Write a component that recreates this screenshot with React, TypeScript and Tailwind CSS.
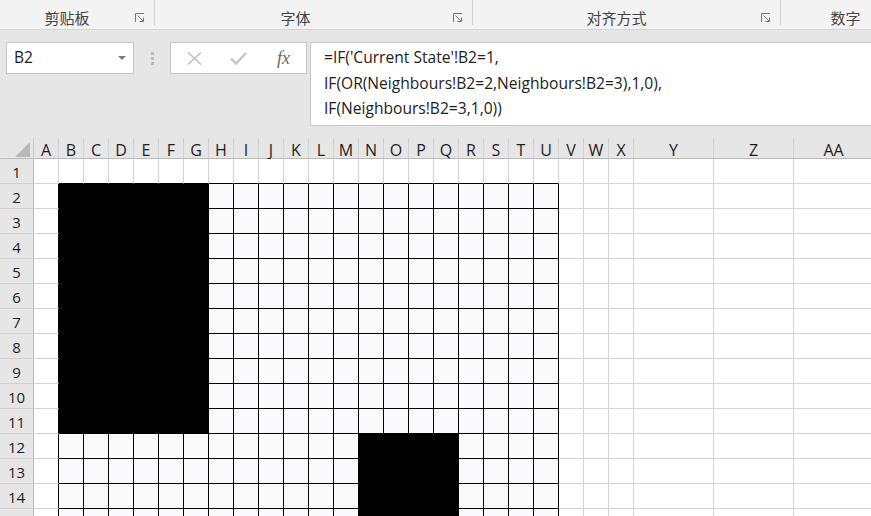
const COLS = [
  "A", "B", "C", "D", "E", "F", "G", "H", "I", "J", "K", "L", "M", "N",
  "O", "P", "Q", "R", "S", "T", "U", "V", "W", "X", "Y", "Z", "AA",
];
const ROWS = [1, 2, 3, 4, 5, 6, 7, 8, 9, 10, 11, 12, 13, 14, 15];

const wide = (c: number) => c >= 24;

// bordered block B2:U.. and the live (black) cells
const inBox = (r: number, c: number) => r >= 2 && c >= 1 && c <= 20;
const isOn = (r: number, c: number) =>
  (r >= 2 && r <= 11 && c >= 1 && c <= 6) || (r >= 12 && c >= 13 && c <= 16);

const GROUPS = [
  { label: "剪贴板", w: "w-[155px]", pad: "" },
  { label: "字体", w: "w-[318px]", pad: "pr-[16px]" },
  { label: "对齐方式", w: "w-[308px]", pad: "" },
  { label: "数字", w: "w-[150px]", pad: "" },
];

const Launcher = () => (
  <svg width="10" height="10" viewBox="0 0 10 10" className="text-[#777]">
    <path d="M0.5 9V0.5H9" fill="none" stroke="currentColor" strokeWidth="1" />
    <path d="M2.5 2.5L8 8M4.5 8.5H8.5V4.5" fill="none" stroke="currentColor" strokeWidth="1" />
  </svg>
);

const Ribbon = () => (
  <div className="flex h-[30px] shrink-0 overflow-hidden border-b border-[#d5d5d5] bg-[#f3f3f3]">
    {GROUPS.map((g, i) => (
      <div key={i} className={`${g.w} flex h-[25px] shrink-0 items-start border-r border-[#d2d2d2]`}>
        <div className={`${g.pad} flex-1 pt-[8px] text-center text-[15px] leading-[20px] text-[#444]`}>{g.label}</div>
        <div className="flex w-[20px] justify-start pl-[1px] pt-[13px]">
          <Launcher />
        </div>
      </div>
    ))}
  </div>
);

const FormulaBar = () => (
  <div className="flex h-[108px] shrink-0 items-start overflow-hidden bg-[#e6e6e6] pt-[12px]">
    <div className="ml-[6px] flex h-[32px] w-[128px] shrink-0 items-center border border-[#c6c6c6] bg-white pl-[7px] pr-[7px]">
      <span className="flex-1 font-['Open_Sans',sans-serif] text-[15.5px] text-[#222]">B2</span>
      <svg width="8" height="4" viewBox="0 0 8 4">
        <path d="M0 0H8L4 4Z" fill="#7a7a7a" />
      </svg>
    </div>
    <div className="flex h-[32px] w-[36px] shrink-0 flex-col items-center justify-center gap-[2px]">
      <div className="h-[3px] w-[3px] bg-[#bdbdbd]" />
      <div className="h-[3px] w-[3px] bg-[#bdbdbd]" />
      <div className="h-[3px] w-[3px] bg-[#bdbdbd]" />
    </div>
    <div className="flex h-[32px] w-[137px] shrink-0 items-center border border-[#c6c6c6] bg-white">
      <div className="flex w-[45px] justify-center pl-[1px]">
        <svg width="15" height="13" viewBox="0 0 15 13">
          <path d="M1 0.5L14 12.5M14 0.5L1 12.5" stroke="#bbbbbb" strokeWidth="1.4" />
        </svg>
      </div>
      <div className="flex w-[45px] justify-center">
        <svg width="17" height="13" viewBox="0 0 17 13">
          <path d="M1 6.5L6 11.5L16 1" fill="none" stroke="#c4c4c4" strokeWidth="2.4" />
        </svg>
      </div>
      <div className="flex w-[45px] justify-center font-['Liberation_Serif',serif] text-[18px] italic text-[#6a6a6a]">
        fx
      </div>
    </div>
    <div className="ml-[3px] h-[84px] w-[600px] shrink-0 border border-[#c6c6c6] bg-white pl-[13px] pt-[2px] font-['Open_Sans',sans-serif] text-[15.6px] leading-[25.5px] text-[#222]">
      <div>=IF('Current State'!B2=1,</div>
      <div>IF(OR(Neighbours!B2=2,Neighbours!B2=3),1,0),</div>
      <div>IF(Neighbours!B2=3,1,0))</div>
    </div>
  </div>
);

const Cell = ({ r, c }: { r: number; c: number }) => {
  const on = isOn(r, c);
  const box = inBox(r, c);
  const rb = box || inBox(r, c + 1);
  const bb = box || inBox(r + 1, c);
  return (
    <div
      className={`${wide(c) ? "w-[80px]" : "w-[25px]"} h-[25px] shrink-0 border-r border-b ${
        on ? "bg-black" : box ? "bg-[#fafafd]" : "bg-white"
      } ${rb ? "border-r-black" : "border-r-[#d4d4d4]"} ${bb ? "border-b-black" : "border-b-[#d4d4d4]"}`}
    />
  );
};

const Sheet = () => (
  <div className="flex-1 overflow-hidden bg-white font-['Open_Sans',sans-serif] text-[#1e1e1e]">
    <div className="flex h-[21px] bg-[#e6e6e6]">
      <div className="flex h-[21px] w-[34px] shrink-0 items-end justify-end border-r border-b border-r-[#c8c8c8] border-b-[#bcbcbc] pb-[1px] pr-[3px]">
        <svg width="15" height="15" viewBox="0 0 15 15">
          <path d="M15 0V15H0Z" fill="#b9b9b9" />
        </svg>
      </div>
      {COLS.map((name, c) => (
        <div
          key={name}
          className={`${wide(c) ? "w-[80px]" : "w-[25px]"} flex h-[21px] shrink-0 items-center justify-center border-r border-b border-r-[#d0d0d0] border-b-[#bcbcbc] pt-[4px] text-[16px] leading-none`}
        >
          {name}
        </div>
      ))}
    </div>
    {ROWS.map((r) => (
      <div key={r} className="flex">
        <div className="flex h-[25px] w-[34px] shrink-0 items-center justify-center border-r border-b border-r-[#bcbcbc] border-b-[#d0d0d0] bg-[#e6e6e6] pt-[2px] text-[15px] leading-none">
          {r}
        </div>
        {COLS.map((name, c) => (
          <Cell key={name} r={r} c={c} />
        ))}
      </div>
    ))}
  </div>
);

export default function App() {
  return (
    <div className="flex h-[516px] w-[871px] flex-col overflow-hidden font-['Noto_Sans','Noto_Sans_CJK_SC',sans-serif]">
      <Ribbon />
      <FormulaBar />
      <Sheet />
    </div>
  );
}
